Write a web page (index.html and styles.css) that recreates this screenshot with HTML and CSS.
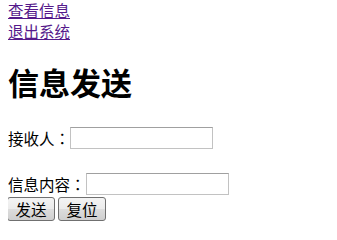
FILE: index.html
```html
<!DOCTYPE html>
<html lang="zh">
<head>
<meta charset="utf-8">
<title>信息发送</title>
<link rel="stylesheet" href="styles.css">
</head>
<body>
<nav class="links">
  <a class="link" href="#view">查看信息</a>
  <a class="link" href="#exit">退出系统</a>
</nav>
<h1 class="title">信息发送</h1>
<form class="form">
  <div class="row row-first">
    <label class="label" for="to">接收人<span class="colon" lang="zh-TW">：</span></label>
    <input class="field" id="to" type="text">
  </div>
  <div class="row row-second">
    <label class="label" for="msg">信息内容<span class="colon" lang="zh-TW">：</span></label>
    <input class="field" id="msg" type="text">
  </div>
  <div class="buttons">
    <button class="btn" type="submit">发送</button>
    <button class="btn" type="reset">复位</button>
  </div>
</form>
</body>
</html>
```
FILE: styles.css
```css
html, body {
  background: #ffffff;
}
body {
  margin: 0 8px;
  font-family: "Noto Sans CJK SC", "Noto Sans", sans-serif;
  font-size: 15.5px;
  color: #000000;
}
.links {
  display: flex;
  flex-direction: column;
  align-items: flex-start;
}
.link {
  line-height: 21px;
  color: #551a8b;
  text-decoration: underline;
  text-underline-offset: 1px;
}
.title {
  margin: 19px 0 0;
  font-size: 31px;
  line-height: 42px;
  font-weight: bold;
}
.form {
  margin: 24px 0 0;
}
.row {
  display: flex;
  align-items: center;
}
.row-second {
  margin-top: 24px;
}
.label {
  line-height: 22px;
  white-space: nowrap;
}
.colon {
  font-family: "Noto Sans CJK TC", "Noto Sans CJK SC", sans-serif;
}
.field {
  box-sizing: border-box;
  width: 143px;
  height: 22px;
  margin: 0;
  padding: 1px 3px;
  border: 1px solid #c2c2c2;
  border-top-color: #a0a0a0;
  background: #ffffff;
  font: inherit;
}
.buttons {
  display: flex;
  gap: 3px;
  margin: 2px 0 0 -1px;
}
.btn {
  box-sizing: border-box;
  width: 48px;
  height: 24px;
  margin: 0;
  padding: 0;
  border: 1px solid #707070;
  border-radius: 3px;
  background: linear-gradient(#f4f4f4 0%, #ebebeb 50%, #dddddd 51%, #cfcfcf 100%);
  font-family: inherit;
  font-size: 15.5px;
  line-height: 20px;
  color: #000000;
}
```
